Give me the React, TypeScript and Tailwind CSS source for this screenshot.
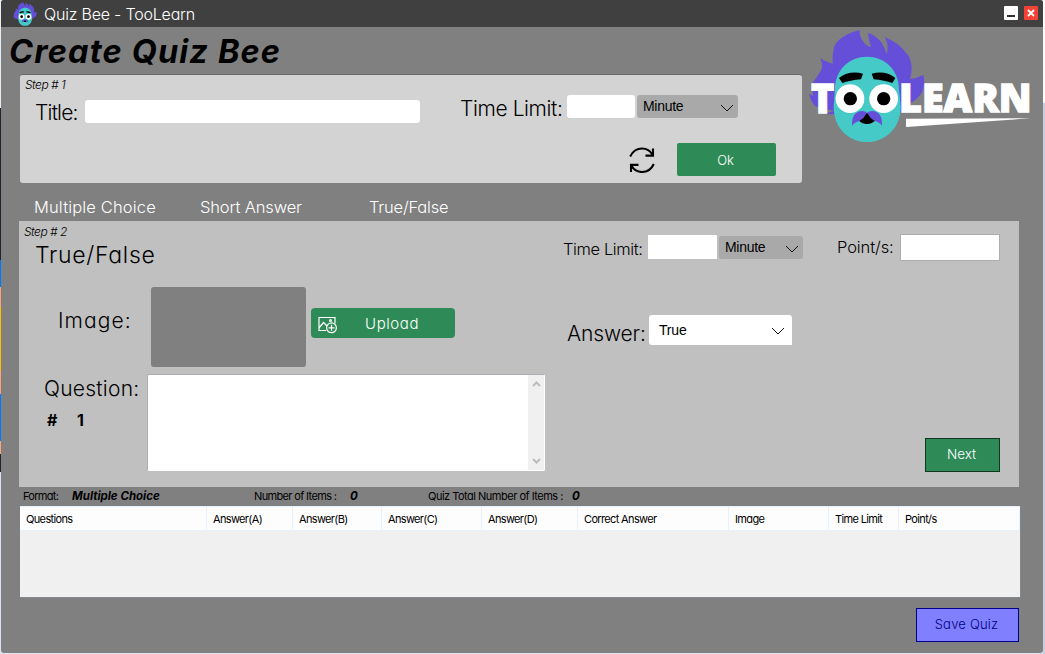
import React from "react";

const gothic = "font-['Inter'] [font-feature-settings:'cv11'] whitespace-nowrap";

function Chevron({ className = "" }: { className?: string }) {
  return (
    <svg className={`h-[8px] w-[14px] shrink-0 ${className}`} viewBox="0 0 14 8" fill="none" stroke="#111" strokeWidth="1">
      <path d="M1 1l6 6 6-6" />
    </svg>
  );
}

function Face() {
  return (
    <>
      <path
        fill="#654fd9"
        d="M27 281L40 288Q33 266 40 245Q63 215 66 204Q68 190 61 174Q75 185 98 191Q96 165 103 138Q120 106 178 90Q179 115 195 131Q204 140 213 141Q205 118 204 98Q233 109 246 130Q255 145 260 162Q268 136 254 111Q298 129 318 159Q334 172 335 207Q334 225 330 237Q352 234 370 225Q376 250 367 275Q355 298 325 312L300 340L85 343Q78 341 82 338L103 333Q60 325 45 318Q33 305 27 281Z"
      />
      <path
        fill="#45cac8"
        d="M105 268C105 208 150 170 201 170S297 208 297 268L302 320C302 385 255 426 201 426S101 385 101 320Z"
      />
      <path d="M117 234Q148 210 189 221L183 238Q150 241 127 249Z" />
      <path d="M286 234Q256 210 215 221L221 238Q254 241 277 249Z" />
      <circle cx="150" cy="296" r="43" fill="#fff" />
      <circle cx="251" cy="296" r="43" fill="#fff" />
      <circle cx="151" cy="296" r="20" />
      <circle cx="251" cy="296" r="20" />
      <path fill="#654fd9" d="M156 377Q154 335 187 333Q197 333 201 339Q206 333 216 333Q248 335 246 377Q236 361 201 360Q167 361 156 377Z" />
      <path d="M201 338Q193 354 178 363Q187 372 201 372T224 363Q209 354 201 338Z" />
    </>
  );
}

function Logo() {
  return (
    <svg className="h-[156px] w-[241px] shrink-0" viewBox="6 81 723 468">
      <Face />
      <g className="font-['Open_Sans'] font-extrabold" fill="#fff" stroke="#fff" strokeWidth="4">
        <text x="33" y="340" fontSize="124" textLength="70" lengthAdjust="spacingAndGlyphs">T</text>
        <text x="297" y="336" fontSize="114" textLength="398" lengthAdjust="spacingAndGlyphs">LEARN</text>
      </g>
      <path fill="#fff" d="M318 356L692 355L318 381Z" />
    </svg>
  );
}

function TitleBar() {
  return (
    <div className="flex h-[27px] shrink-0 items-center bg-[#404040] pr-[5px]">
      <svg className="ml-[12px] h-[24px] w-[24px]" viewBox="24 88 352 340" preserveAspectRatio="none">
        <Face />
      </svg>
      <div className={`${gothic} ml-[7px] text-[16px] leading-[26px] font-light tracking-[-0.2px] text-white`}>Quiz Bee - TooLearn</div>
      <div className="mb-[1px] ml-auto flex gap-[6px]">
        <div className="flex h-[14px] w-[14px] items-end justify-center rounded-[1px] bg-white pb-[3px]">
          <div className="h-[2px] w-[8px] bg-[#333]" />
        </div>
        <div className="flex h-[14px] w-[14px] items-center justify-center rounded-[1px] bg-[#f44336]">
          <svg className="h-[8px] w-[8px]" viewBox="0 0 8 8" stroke="#fff" strokeWidth="1.8">
            <path d="M1 1l6 6M7 1L1 7" />
          </svg>
        </div>
      </div>
    </div>
  );
}

function StepOne() {
  return (
    <div className="ml-[19px] h-[109px] w-[782px] rounded-[3px] border-t border-[#696969] bg-[#d3d3d3]">
      <div className={`${gothic} h-[20px] pl-[5px] text-[12px] leading-[20px] font-light tracking-[-0.5px] italic`}>Step # 1</div>
      <div className="flex h-[28px] items-start">
        <div className={`${gothic} mt-[5px] ml-[15px] w-[50px] text-[21px] leading-[25px] font-light tracking-[-0.8px]`}>Title:</div>
        <div className="mt-[5px] h-[23px] w-[335px] rounded-[3px] bg-white" />
        <div className={`${gothic} mt-[1px] ml-[40px] w-[107px] text-[21px] leading-[25px] font-light tracking-[-0.4px]`}>Time Limit:</div>
        <div className="h-[23px] w-[68px] rounded-[3px] bg-white" />
        <div className="ml-[2px] flex h-[23px] w-[101px] items-center justify-between rounded-[3px] bg-[#a9a9a9] pr-[4px] pl-[6px] font-['Liberation_Sans'] text-[14px] tracking-[-0.3px]">
          Minute
          <Chevron className="mt-[2px]" />
        </div>
      </div>
      <div className="mt-[20px] flex justify-end pr-[26px]">
        <svg className="mt-[4px] h-[26px] w-[26px]" viewBox="0 0 26 26" fill="none" stroke="#000" strokeWidth="2.1">
          <path d="M1.2 9.5Q5 1.5 13 1.5Q20 1.5 23.7 8" />
          <path d="M24 1.5V8.6H16.500" />
          <path d="M24.800 17Q21 25 13 25Q6 25 2.300 18.500" />
          <path d="M2 25V17.900H9.500" />
        </svg>
        <div className={`${gothic} ml-[22px] h-[33px] w-[99px] rounded-[2px] bg-[#2e8b57] pr-[2px] text-center text-[13px] leading-[34px] font-light text-white`}>Ok</div>
      </div>
    </div>
  );
}

function Tabs() {
  const tab = `${gothic} text-[16.500px] leading-[25px] font-light text-white`;
  return (
    <div className="flex h-[38px] shrink-0 pt-[12px] pl-[33px]">
      <div className={`${tab} w-[166px] tracking-[0.15px]`}>Multiple Choice</div>
      <div className={`${tab} w-[169px] tracking-[-0.15px]`}>Short Answer</div>
      <div className={`${tab} tracking-[-0.2px]`}>True/False</div>
    </div>
  );
}

function StepTwo() {
  return (
    <div className="ml-[18px] flex h-[266px] w-[1000px] shrink-0 bg-[#c0c0c0]">
      <div className="w-[530px] shrink-0">
        <div className={`${gothic} h-[20px] pl-[5px] text-[12px] leading-[21px] font-light tracking-[-0.5px] italic`}>Step # 2</div>
        <div className={`${gothic} h-[28px] pl-[16px] text-[23px] leading-[28px] font-light tracking-[0.7px]`}>True/False</div>
        <div className="mt-[18px] flex h-[80px] items-start">
          <div className={`${gothic} mt-[21px] ml-[39px] w-[93px] text-[21px] leading-[25px] font-light tracking-[1.1px]`}>Image:</div>
          <div className="h-[80px] w-[155px] rounded-[3px] bg-[#808080]" />
          <div className="mt-[21px] ml-[5px] flex h-[30px] w-[144px] items-center rounded-[4px] bg-[#2e8b57] pl-[7px]">
            <svg className="mt-[4px] h-[18px] w-[19px]" viewBox="0 0 19 18" fill="none" stroke="#fff" strokeWidth="1.200">
              <path d="M8 14.500H1V1.500H17V7.500M1 12L5.500 6.500L9 10" />
              <circle cx="12.500" cy="4.600" r="0.900" />
              <circle cx="13.500" cy="11.800" r="4.900" />
              <path d="M13.500 8.800v6M10.500 11.800h6" />
            </svg>
            <div className={`${gothic} mt-[2px] ml-[28px] text-[15px] leading-[30px] font-light tracking-[0.6px] text-white`}>Upload</div>
          </div>
        </div>
        <div className="mt-[7px] flex">
          <div className="w-[128px] shrink-0 pt-[1px]">
            <div className={`${gothic} ml-[25px] text-[21px] leading-[27px] font-light tracking-[0.25px]`}>Question:</div>
            <div className={`${gothic} mt-[8px] ml-[28px] flex text-[16px] leading-[20px] font-bold`}>
              <span className="w-[30px]">#</span>
              <span>1</span>
            </div>
          </div>
          <div className="flex h-[97px] w-[398px] justify-end rounded-[2px] border border-white border-t-[#abadb3] border-l-[#abadb3] bg-white">
            <div className="flex w-[16px] flex-col items-center justify-between bg-[#f0f0f0] py-[6px]">
              <svg className="h-[6px] w-[9px]" viewBox="0 0 9 6" fill="none" stroke="#bcbcbc" strokeWidth="2">
                <path d="M1 5l3.500-3.500L8 5" />
              </svg>
              <svg className="h-[6px] w-[9px]" viewBox="0 0 9 6" fill="none" stroke="#bcbcbc" strokeWidth="2">
                <path d="M1 1l3.500 3.500L8 1" />
              </svg>
            </div>
          </div>
        </div>
      </div>
      <div className="flex w-[470px] flex-col pt-[13px]">
        <div className="flex h-[27px] items-start">
          <div className={`${gothic} mt-[3px] ml-[14px] w-[85px] text-[16.500px] leading-[25px] font-light tracking-[-0.4px]`}>Time Limit:</div>
          <div className="mt-[1px] h-[24px] w-[69px] bg-white" />
          <div className="mt-[2px] ml-[2px] flex h-[23px] w-[84px] items-center justify-between rounded-[3px] bg-[#a9a9a9] pr-[4px] pl-[6px] font-['Liberation_Sans'] text-[14px] tracking-[-0.3px]">
            Minute
            <Chevron className="mt-[2px]" />
          </div>
          <div className={`${gothic} mt-[1px] ml-[34px] w-[63px] text-[16.500px] leading-[25px] font-light tracking-[-0.1px]`}>Point/s:</div>
          <div className="h-[27px] w-[100px] border border-[#abadb3] bg-white" />
        </div>
        <div className="mt-[54px] flex h-[30px] items-start">
          <div className={`${gothic} mt-[6px] ml-[18px] w-[82px] text-[21px] leading-[25px] font-light tracking-[-0.15px]`}>Answer:</div>
          <div className="flex h-[30px] w-[143px] items-center justify-between rounded-l-[3px] rounded-tr-[3px] bg-white pr-[7px] pl-[10px] font-['Liberation_Sans'] text-[14px] tracking-[-0.2px]">
            True
            <Chevron className="mt-[2px]" />
          </div>
        </div>
        <div className={`${gothic} mt-[93px] mr-[19px] h-[34px] w-[75px] self-end border border-[#12371f] bg-[#2e8b57] pr-[2px] text-center text-[13.500px] leading-[31px] font-light text-white`}>Next</div>
      </div>
    </div>
  );
}

function Summary() {
  const label = `${gothic} text-[11px] leading-[18px]`;
  const value = `${gothic} text-[11.500px] leading-[18px] font-bold italic`;
  return (
    <div className="flex h-[19px] shrink-0 pl-[22px]">
      <div className={`${label} w-[49px] tracking-[-0.7px]`}>Format:</div>
      <div className={`${value} w-[182px]`}>Multiple Choice</div>
      <div className={`${label} w-[96px] tracking-[-0.65px]`}>Number of Items :</div>
      <div className={`${value} w-[78px]`}>0</div>
      <div className={`${label} w-[144px] tracking-[-0.500px]`}>Quiz Total Number of Items :</div>
      <div className={value}>0</div>
    </div>
  );
}

function ItemsTable() {
  const head = `${gothic} border-r border-[#e5f1ff] pl-[6px] text-[11px] leading-[24px] tracking-[-0.65px]`;
  return (
    <div className="ml-[19px] h-[92px] w-[1001px] shrink-0 border-r border-b border-[#828790] bg-[#f0f0f0]">
      <div className="flex h-[25px] border-t border-b border-[#e5f1ff] bg-[#fdfdfd]">
        <div className={`${head} w-[187px]`}>Questions</div>
        <div className={`${head} w-[86px]`}>Answer(A)</div>
        <div className={`${head} w-[89px]`}>Answer(B)</div>
        <div className={`${head} w-[100px]`}>Answer(C)</div>
        <div className={`${head} w-[96px]`}>Answer(D)</div>
        <div className={`${head} w-[151px]`}>Correct Answer</div>
        <div className={`${head} w-[100px]`}>Image</div>
        <div className={`${head} w-[70px]`}>Time Limit</div>
        <div className={`${head} flex-1`}>Point/s</div>
      </div>
    </div>
  );
}

export default function App() {
  return (
    <div className="flex h-[654px] w-[1045px] overflow-hidden bg-[#dbe5f1] text-black">
      <div className="flex w-[1px] shrink-0 flex-col">
        <div className="h-[108px] bg-[#e8eef5]" />
        <div className="h-[152px] bg-[#1f2430]" />
        <div className="h-[27px] bg-[#0078ff]" />
        <div className="h-[20px] bg-[#ffa07a]" />
        <div className="h-[63px] bg-[#ffc000]" />
        <div className="h-[24px] bg-[#ffa07a]" />
        <div className="h-[47px] bg-[#0078ff]" />
        <div className="h-[13px] bg-[#ffa07a]" />
        <div className="h-[18px] bg-[#1f2430]" />
      </div>
      <div className="flex h-[653px] w-[1042px] shrink-0 flex-col overflow-hidden rounded-[3px] bg-[#808080]">
        <TitleBar />
        <div className="flex h-[156px] shrink-0">
          <div className="w-[801px] shrink-0">
            <div className={`${gothic} h-[47px] pl-[8px] text-[32.500px] leading-[50px] font-bold tracking-[1.150px] italic`}>Create Quiz Bee</div>
            <StepOne />
          </div>
          <Logo />
        </div>
        <Tabs />
        <StepTwo />
        <Summary />
        <ItemsTable />
        <div className={`${gothic} mt-[10px] mr-[24px] h-[34px] w-[103px] shrink-0 self-end border border-[#000090] bg-[#8080ff] pr-[2px] text-center text-[13px] leading-[31px] font-light tracking-[0.2px] text-[#000080]`}>Save Quiz</div>
      </div>
      <div className="flex w-[2px] flex-col">
        <div className="h-[103px] bg-[#fafafa]" />
        <div className="flex-1 bg-[#c5cfe0]" />
      </div>
    </div>
  );
}
